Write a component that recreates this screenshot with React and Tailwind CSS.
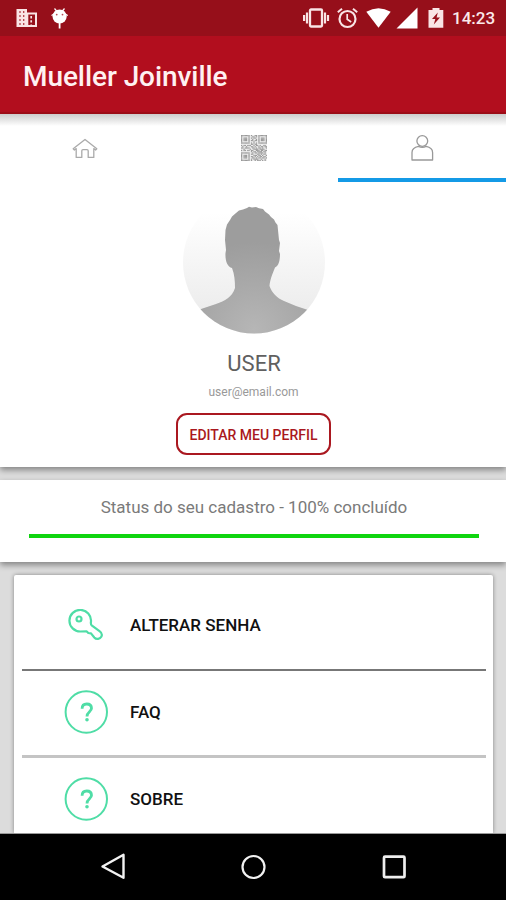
import React from "react";

function StatusBar() {
  return (
    <div className="flex h-9 shrink-0 items-center bg-[#960f1a] text-white">
      <svg className="ml-4 h-5 w-[22px]" viewBox="0 0 22 20">
        <path fill="#f9e4e5" fillRule="evenodd" d="M0.5 1H11V4.5H21V19H0.5ZM12.3 6.5V17H19V6.5Z" />
        <path stroke="#b3434c" strokeWidth="1.3" strokeDasharray="2 2" d="M4 3V18M7.7 3V18" />
        <path stroke="#f9e4e5" strokeWidth="1.7" strokeDasharray="2.4 1.8" d="M15.2 8V17" />
      </svg>
      <svg className="ml-3 h-6 w-5" viewBox="0 0 20 24">
        <path stroke="#fff" strokeWidth="1.2" d="M4.5 2.5L7 5.5M14.5 2.5L12 5.5M1.5 9.5L4 8M17.8 9.5L15 8" />
        <path stroke="#fff" strokeWidth="1.8" d="M9.6 15V22.5" />
        <ellipse cx="9.6" cy="10.5" rx="7.1" ry="7" fill="#fff" />
        <circle cx="6.7" cy="8.6" r="0.9" fill="#b64b55" />
        <circle cx="12.5" cy="8.6" r="0.9" fill="#b64b55" />
      </svg>
      <div className="ml-auto flex h-full items-center">
        <svg className="h-5 w-7" viewBox="0 0 28 20" fill="none" stroke="#f9e4e5">
          <rect x="7" y="1.5" width="12" height="17" rx="1" strokeWidth="2.3" />
          <path strokeWidth="2.2" d="M4 4.5V15.5M22 4.5V15.5M1.1 7V13M25 7V13" />
        </svg>
        <svg className="ml-[6px] h-[22px] w-[22px]" viewBox="0 0 22 22" fill="none" stroke="#f9e4e5">
          <circle cx="10.5" cy="12" r="8" strokeWidth="2.2" />
          <path strokeWidth="2" d="M0.8 5.2L5 1.7M20.2 5.2L16 1.7" />
          <path strokeWidth="1.7" d="M10.2 7V12.3L14.2 15" />
        </svg>
        <svg className="ml-[7px] h-5 w-[25px]" viewBox="0 0 25 20">
          <path fill="#fff" d="M0.3 3.8Q12.5 -3.4 24.7 3.8L12.5 19.8Z" />
        </svg>
        <svg className="ml-[5px] h-[22px] w-[22px]" viewBox="0 0 22 22">
          <path fill="#fff" d="M21.5 0.5V21.5H0.5Z" />
        </svg>
        <svg className="ml-[10px] h-5 w-4" viewBox="0 0 16 20">
          <path fill="#f9e4e5" d="M4.5 0H11.5V2H15.3V19.8H0.5V2H4.5Z" />
          <path fill="#960f1a" d="M9.8 4.5L4 11H7.3L5.8 16.5L12 9.5H8.6Z" />
        </svg>
        <span className="ml-2 mr-[10px] w-[44px] whitespace-nowrap pt-px text-[17px] font-medium leading-none text-[#fbe9ea]">14:23</span>
      </div>
    </div>
  );
}

const QR_ROWS = [
  "111111101001101111111",
  "100000100110101000001",
  "101110101011001011101",
  "101110100100101011101",
  "101110101101101011101",
  "100000100010001000001",
  "111111101010101111111",
  "000000001101100000000",
  "101101110010110100110",
  "010010001101001011011",
  "110111100110101101001",
  "001000010011110111100",
  "101101101100111011011",
  "000000001011011110110",
  "111111100101101111010",
  "100000101100011010110",
  "101110100011101101001",
  "101110101101010110110",
  "101110100110101101101",
  "100000101011110010010",
  "111111101001011101010",
];

function QrIcon() {
  return (
    <svg className="h-[26px] w-[26px]" viewBox="0 0 21 21" fill="#999999">
      <rect width="21" height="21" fill="#eeeeee" />
      {QR_ROWS.flatMap((row, y) =>
        row.split("").map((bit, x) =>
          bit === "1" ? <rect key={`${x}-${y}`} x={x} y={y} width="1" height="1" /> : null
        )
      )}
    </svg>
  );
}

function Tabs() {
  return (
    <div className="grid h-[68px] shrink-0 grid-cols-[169px_169px_168px]">
      <div className="flex justify-center pl-px pt-[23px]">
        <svg className="h-6 w-[26px]" viewBox="0 0 26 24" fill="none" stroke="#aaa" strokeWidth="1.3" strokeLinejoin="round">
          <path d="M1.2 11.8L13 2.4L24.8 11.8L23.6 13L21.8 11.6V20.4H16.2V13.8Q16.2 12.6 15 12.6H11Q9.8 12.6 9.8 13.8V20.4H4.2V11.6L2.4 13Z" />
        </svg>
      </div>
      <div className="flex justify-center pl-px pt-[21px]">
        <QrIcon />
      </div>
      <div className="flex justify-center border-b-4 border-[#149ae6] pt-5">
        <svg className="h-[28px] w-6" viewBox="0 0 24 28" fill="none" stroke="#999" strokeWidth="1.3">
          <circle cx="12.3" cy="7" r="5.4" />
          <path strokeLinejoin="round" d="M2 26V18.5C2 15.2 4.9 13.2 8.5 12.4Q12.3 14.4 16.1 12.4C19.7 13.2 22.6 15.2 22.6 18.5V26Z" />
        </svg>
      </div>
    </div>
  );
}

function Avatar() {
  return (
    <svg className="mt-[9px] h-[143px] w-[142px]" viewBox="183 191 142 143">
      <defs>
        <linearGradient id="backdrop" x1="0" y1="0" x2="0" y2="1">
          <stop offset="0.15" stopColor="#ffffff" />
          <stop offset="0.85" stopColor="#ececec" />
        </linearGradient>
        <radialGradient id="person" gradientUnits="userSpaceOnUse" cx="254" cy="330" r="88">
          <stop offset="0" stopColor="#b6b6b6" />
          <stop offset="1" stopColor="#9d9d9d" />
        </radialGradient>
        <clipPath id="round">
          <circle cx="254" cy="262.5" r="71" />
        </clipPath>
      </defs>
      <g clipPath="url(#round)">
        <rect x="183" y="191" width="142" height="143" fill="url(#backdrop)" />
        <path
          fill="url(#person)"
          d="M247 208L249 206.8L252 207.5L256 207L259 208.3L263 209L265 211.5L269 214.5L271 217L274 219.5L275.5 222.5L277.5 225L278 230L278.5 235L279 240L280 243L279 251L280 254C280 261 278.5 266 275 267.5C272 275 270 280 269.5 286C272 293 277 298 284 301L296 306L308 310L325 325V336H183V325L201 309L216 304C225 301 232 297 235 288C235 281 234.5 274 232 268C227.5 267 225 261 225.5 253L226 250L225 240L225.5 230L227 224.5L230 220L232 216.5L236 213L239 210.5L243 209.5Z"
        />
      </g>
    </svg>
  );
}

function Profile() {
  return (
    <section className="relative flex h-[353px] shrink-0 flex-col bg-white shadow-[0_3px_6px_rgba(0,0,0,0.4)]">
      <div className="pointer-events-none absolute inset-x-0 top-0 h-3 bg-gradient-to-b from-[#cccccc] to-transparent" />
      <Tabs />
      <div className="flex flex-col items-center pl-[1px]">
        <Avatar />
        <div className="mt-[17px] pl-px text-[22px] leading-[26px] text-[#606060]">USER</div>
        <div className="mt-[8px] text-[12px] leading-[14px] text-[#999]">user@email.com</div>
        <button className="mt-[14px] h-[42px] w-[155px] rounded-[11px] border-2 border-[#aa1820] pt-px text-[14px] font-medium leading-none text-[#aa1820]">
          EDITAR MEU PERFIL
        </button>
      </div>
    </section>
  );
}

function KeyIcon() {
  return (
    <svg className="h-[34px] w-[38px]" viewBox="0 0 38 34" fill="none" stroke="#4fdda6" strokeWidth="2.2" strokeLinejoin="round">
      <path d="M24 12.5A10.8 10.8 0 1 0 13.5 22.5L19.5 22.3L21.3 24L24 24.4L27.3 28.5C29.5 31 33 30 34.3 27.7C35.4 25.7 34.5 23.6 32.5 22.2L25 16.7C23.4 15.3 23.7 14.3 24 12.5Z" />
      <circle cx="12" cy="10" r="2.5" />
    </svg>
  );
}

function QuestionIcon() {
  return (
    <svg className="h-11 w-11" viewBox="0 0 44 44" fill="none" stroke="#4fdda6">
      <circle cx="22.3" cy="22" r="20.7" strokeWidth="2" />
      <path strokeWidth="2.8" d="M18.1 18.7C18.1 15.6 19.9 14 22.7 14C25.8 14 27.5 15.8 27.5 18.3C27.5 21.8 23 21.8 23 26.5" />
      <circle cx="23" cy="29.7" r="1.8" fill="#4fdda6" stroke="none" />
    </svg>
  );
}

function MenuRow({ icon, label }) {
  return (
    <div className="flex flex-1 items-center pl-[42px]">
      <div className="flex w-11 justify-center">{icon}</div>
      <span className="ml-[22px] text-[17px] font-medium leading-none text-[#111]">{label}</span>
    </div>
  );
}

function NavBar() {
  return (
    <nav className="flex h-[66px] shrink-0 items-center justify-between bg-black pl-[100px] pr-[98px]">
      <svg className="h-7 w-[26px]" viewBox="0 0 26 28" fill="none" stroke="#f2f2f2" strokeWidth="2.4">
        <path strokeLinejoin="round" d="M2.5 13.5L23.5 1.8V24.8Z" />
      </svg>
      <svg className="h-7 w-7" viewBox="0 0 28 28" fill="none" stroke="#f2f2f2" strokeWidth="2.2">
        <circle cx="14.5" cy="14" r="11" />
      </svg>
      <svg className="h-7 w-7" viewBox="0 0 28 28" fill="none" stroke="#eee" strokeWidth="2.7">
        <rect x="4" y="3.7" width="20.5" height="20.5" rx="1" />
      </svg>
    </nav>
  );
}

export default function App() {
  return (
    <div className="flex h-[900px] w-[506px] flex-col overflow-hidden bg-[#dcdcdc] font-[Roboto,sans-serif]">
      <StatusBar />
      <header className="flex h-[78px] shrink-0 items-center border-b-2 border-[#a30d18] bg-[#b20e1e] pl-[23px] pt-[6px]">
        <h1 className="text-[28px] font-medium leading-none tracking-[-0.07px] text-[#fff1f1]">Mueller Joinville</h1>
      </header>
      <Profile />
      <section className="mt-[13px] flex h-[82px] shrink-0 flex-col items-center bg-white shadow-[0_3px_6px_rgba(0,0,0,0.4)]">
        <p className="mt-[16px] pl-[2px] text-[17px] leading-[22px] text-[#7a7a7a]">Status do seu cadastro - 100% concluído</p>
        <div className="ml-px mt-4 h-1 w-[450px] bg-[#10d510]" />
      </section>
      <main className="ml-[14px] mr-[13px] mt-[13px] flex h-[258px] shrink-0 flex-col overflow-hidden rounded-t-[2px] bg-white shadow-[0_0_4px_rgba(0,0,0,0.4)]">
        <div className="flex h-[94px] shrink-0 pl-2 pt-[7px]">
          <MenuRow icon={<KeyIcon />} label="ALTERAR SENHA" />
        </div>
        <div className="ml-2 mr-[7px] h-[2px] shrink-0 bg-[#777]" />
        <div className="flex h-[84px] shrink-0 pb-[2px] pl-2">
          <MenuRow icon={<QuestionIcon />} label="FAQ" />
        </div>
        <div className="ml-2 mr-[7px] h-[3px] shrink-0 bg-[#c4c4c4]" />
        <div className="flex h-[84px] shrink-0 pb-[2px] pl-2">
          <MenuRow icon={<QuestionIcon />} label="SOBRE" />
        </div>
      </main>
      <div className="h-px shrink-0 bg-[#999]" />
      <NavBar />
    </div>
  );
}
